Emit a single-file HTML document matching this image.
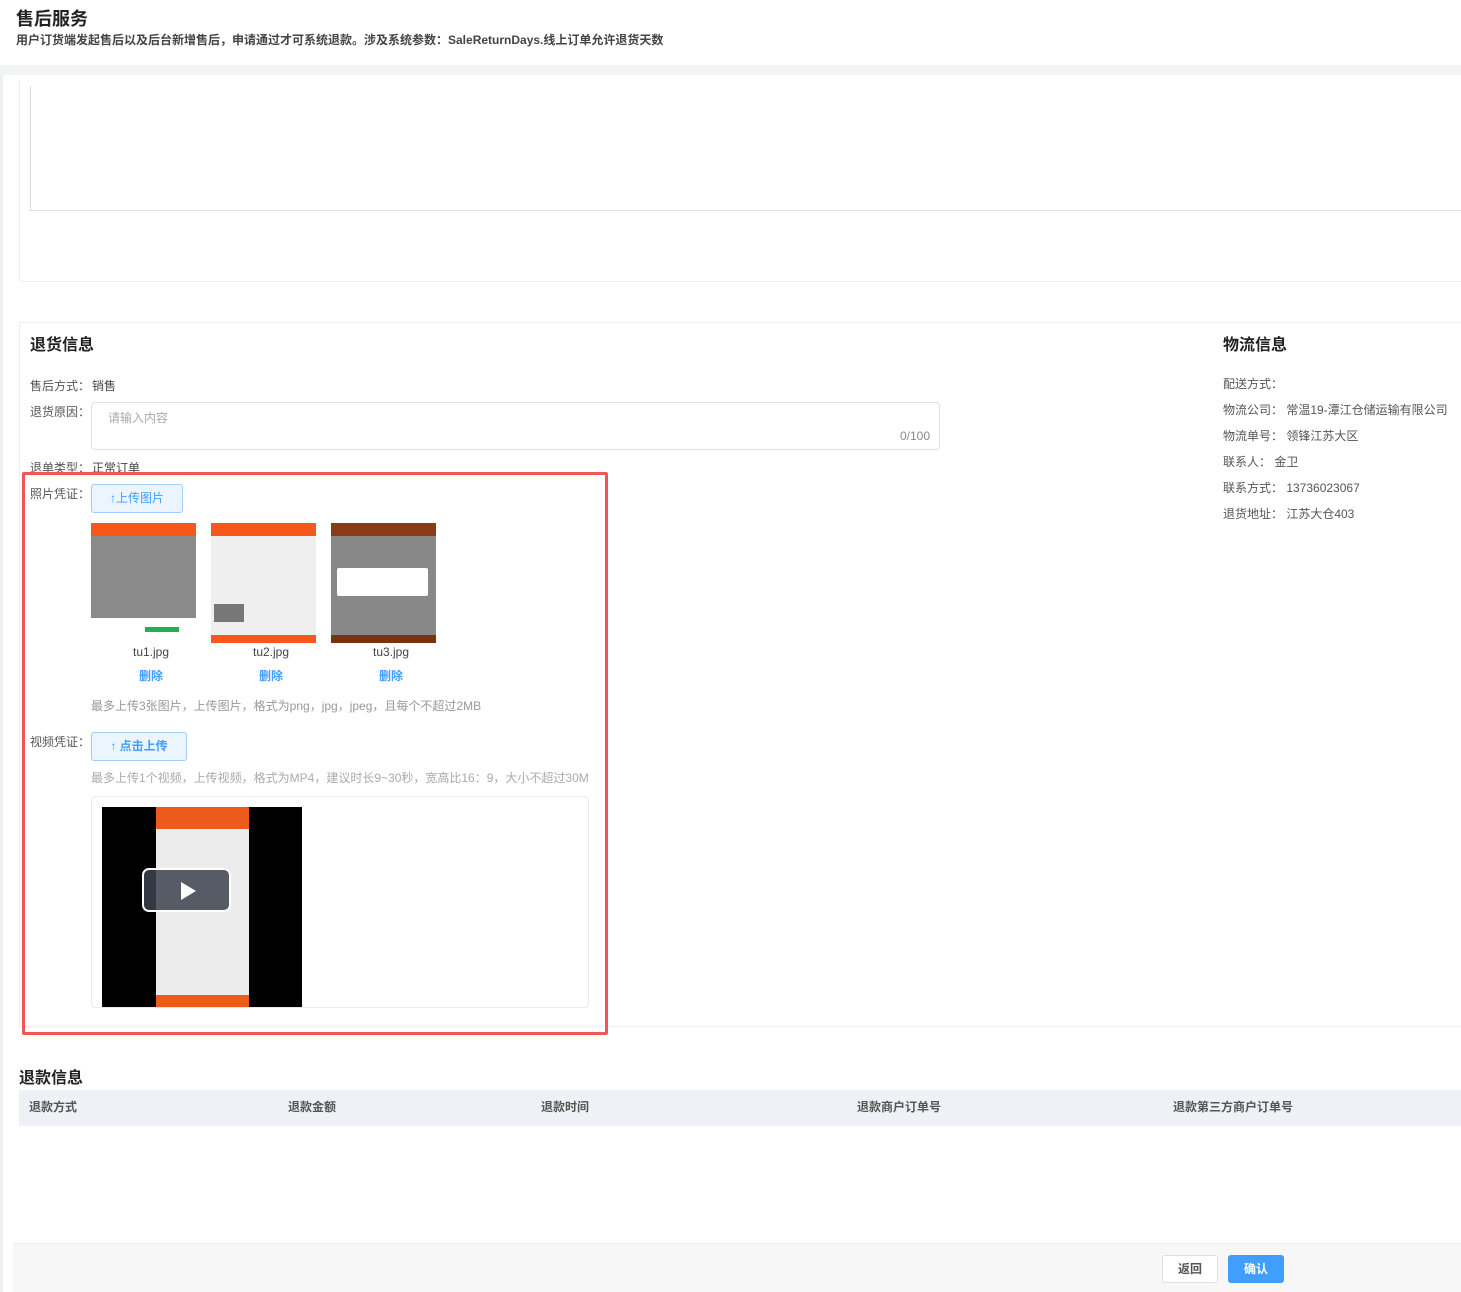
<!DOCTYPE html>
<html><head><meta charset="utf-8"><style>
*{margin:0;padding:0;box-sizing:border-box}
body{width:1461px;height:1292px;position:relative;background:#fff;font-family:"Liberation Sans","Noto Sans CJK SC",sans-serif;color:#333;font-size:12px;overflow:hidden}
.a{position:absolute}
.lbl{color:#555;font-size:12px}
.gray{color:#aaa}
.btn{border:1px solid #a3cdfb;background:#ecf5ff;color:#409eff;border-radius:3px;font-size:12px;text-align:center}
.th{font-size:12px;color:#555;font-weight:bold}
.thumb{width:105px;height:120px;background:#8c8c8c}
</style></head><body>
<div class="a" style="left:16px;top:5px;font-size:18px;font-weight:bold;color:#222">售后服务</div>
<div class="a" style="left:16px;top:31px;font-size:12px;font-weight:bold;color:#444">用户订货端发起售后以及后台新增售后，申请通过才可系统退款。涉及系统参数：SaleReturnDays.线上订单允许退货天数</div>
<div class="a" style="left:0;top:65px;width:1461px;height:11px;background:#f3f4f6"></div>
<div class="a" style="left:0;top:76px;width:3px;height:1216px;background:#eef0f4"></div>
<div class="a" style="left:3px;top:75px;width:1458px;height:1217px;background:#fff;border-top-left-radius:3px"></div>
<div class="a" style="left:19px;top:80px;width:1442px;height:202px;border-left:1px solid #eceef2;border-bottom:1px solid #eceef2;border-bottom-left-radius:3px"></div>
<div class="a" style="left:30px;top:86px;width:1431px;height:125px;border-left:1px solid #ddd;border-bottom:1px solid #ddd"></div>
<div class="a" style="left:19px;top:322px;width:1442px;height:705px;border-top:1px solid #eceef2;border-left:1px solid #eceef2;border-bottom:1px solid #eceef2"></div>
<div class="a" style="left:30px;top:331px;font-size:16px;font-weight:bold;color:#222">退货信息</div>
<div class="a lbl" style="left:30px;top:377px">售后方式：</div><div class="a" style="left:92px;top:377px;color:#444">销售</div>
<div class="a lbl" style="left:30px;top:403px">退货原因：</div>
<div class="a" style="left:91px;top:402px;width:849px;height:48px;border:1px solid #dcdfe6;border-radius:4px"></div>
<div class="a gray" style="left:108px;top:409px">请输入内容</div>
<div class="a" style="left:900px;top:429px;color:#888">0/100</div>
<div class="a lbl" style="left:30px;top:459px">退单类型：</div><div class="a" style="left:92px;top:459px;color:#444">正常订单</div>
<div class="a" style="left:22px;top:472px;width:586px;height:563px;border:3px solid #f25555;border-radius:2px"></div>
<div class="a lbl" style="left:30px;top:485px">照片凭证：</div>
<div class="a btn" style="left:91px;top:484px;width:92px;height:29px;line-height:27px">↑上传图片</div>
<div class="a thumb" style="left:91px;top:523px;background:linear-gradient(#f4581b 0,#f4581b 13px,#8a8a8a 13px,#8a8a8a 95px,#fff 95px)"></div>
<div class="a" style="left:145px;top:627px;width:34px;height:5px;background:#22b04b"></div>
<div class="a thumb" style="left:211px;top:523px;background:linear-gradient(#f4581b 0,#f4581b 13px,#efefef 13px,#efefef 112px,#f4581b 112px)"></div>
<div class="a" style="left:214px;top:604px;width:30px;height:18px;background:#777"></div>
<div class="a thumb" style="left:331px;top:523px;background:linear-gradient(#8a3a14 0,#8a3a14 13px,#888 13px,#888 112px,#7a3310 112px)"></div>
<div class="a" style="left:337px;top:568px;width:91px;height:28px;background:#fff;border-radius:2px"></div>
<div class="a" style="left:133px;top:645px;font-size:12px;color:#444">tu1.jpg</div>
<div class="a" style="left:253px;top:645px;font-size:12px;color:#444">tu2.jpg</div>
<div class="a" style="left:373px;top:645px;font-size:12px;color:#444">tu3.jpg</div>
<div class="a" style="left:139px;top:667px;color:#409eff;font-weight:bold">删除</div>
<div class="a" style="left:259px;top:667px;color:#409eff;font-weight:bold">删除</div>
<div class="a" style="left:379px;top:667px;color:#409eff;font-weight:bold">删除</div>
<div class="a" style="left:91px;top:697px;color:#999">最多上传3张图片，上传图片，格式为png，jpg，jpeg，且每个不超过2MB</div>
<div class="a lbl" style="left:30px;top:733px">视频凭证：</div>
<div class="a btn" style="left:91px;top:732px;width:96px;height:29px;line-height:27px;font-weight:bold">↑ 点击上传</div>
<div class="a" style="left:91px;top:769px;color:#aaa">最多上传1个视频，上传视频，格式为MP4，建议时长9~30秒，宽高比16：9，大小不超过30M</div>
<div class="a" style="left:91px;top:796px;width:498px;height:212px;border:1px solid #e8eaef;border-radius:4px"></div>
<div class="a" style="left:102px;top:807px;width:200px;height:200px;background:#000"></div>
<div class="a" style="left:156px;top:807px;width:93px;height:200px;background:linear-gradient(#ec5a1c 0,#ec5a1c 22px,#ececec 22px,#ececec 188px,#ec5a1c 188px)"></div>
<div class="a" style="left:142px;top:868px;width:89px;height:44px;background:rgba(60,66,78,.85);border:2px solid #fff;border-radius:7px"></div>
<div class="a" style="left:181px;top:882px;width:0;height:0;border-left:15px solid #fff;border-top:9px solid transparent;border-bottom:9px solid transparent"></div>
<div class="a" style="left:1223px;top:331px;font-size:16px;font-weight:bold;color:#222">物流信息</div>
<div class="a lbl" style="left:1223px;top:371px;line-height:26px">配送方式：<br>物流公司：&nbsp;常温19-潭江仓储运输有限公司<br>物流单号：&nbsp;领锋江苏大区<br>联系人：&nbsp;金卫<br>联系方式：&nbsp;13736023067<br>退货地址：&nbsp;江苏大仓403</div>
<div class="a" style="left:19px;top:1064px;font-size:16px;font-weight:bold;color:#222">退款信息</div>
<div class="a" style="left:19px;top:1090px;width:1442px;height:36px;background:#eef1f5"></div>
<div class="a th" style="left:29px;top:1098px">退款方式</div>
<div class="a th" style="left:288px;top:1098px">退款金额</div>
<div class="a th" style="left:541px;top:1098px">退款时间</div>
<div class="a th" style="left:857px;top:1098px">退款商户订单号</div>
<div class="a th" style="left:1173px;top:1098px">退款第三方商户订单号</div>
<div class="a" style="left:13px;top:1243px;width:1448px;height:49px;background:#f7f7f7;border-top:1px solid #eee"></div>
<div class="a" style="left:1162px;top:1255px;width:56px;height:28px;background:#fff;border:1px solid #dcdfe6;border-radius:3px;text-align:center;line-height:26px;color:#555;font-weight:bold">返回</div>
<div class="a" style="left:1228px;top:1255px;width:56px;height:28px;background:#409eff;border-radius:3px;text-align:center;line-height:28px;color:#fff;font-weight:bold">确认</div>
</body></html>
